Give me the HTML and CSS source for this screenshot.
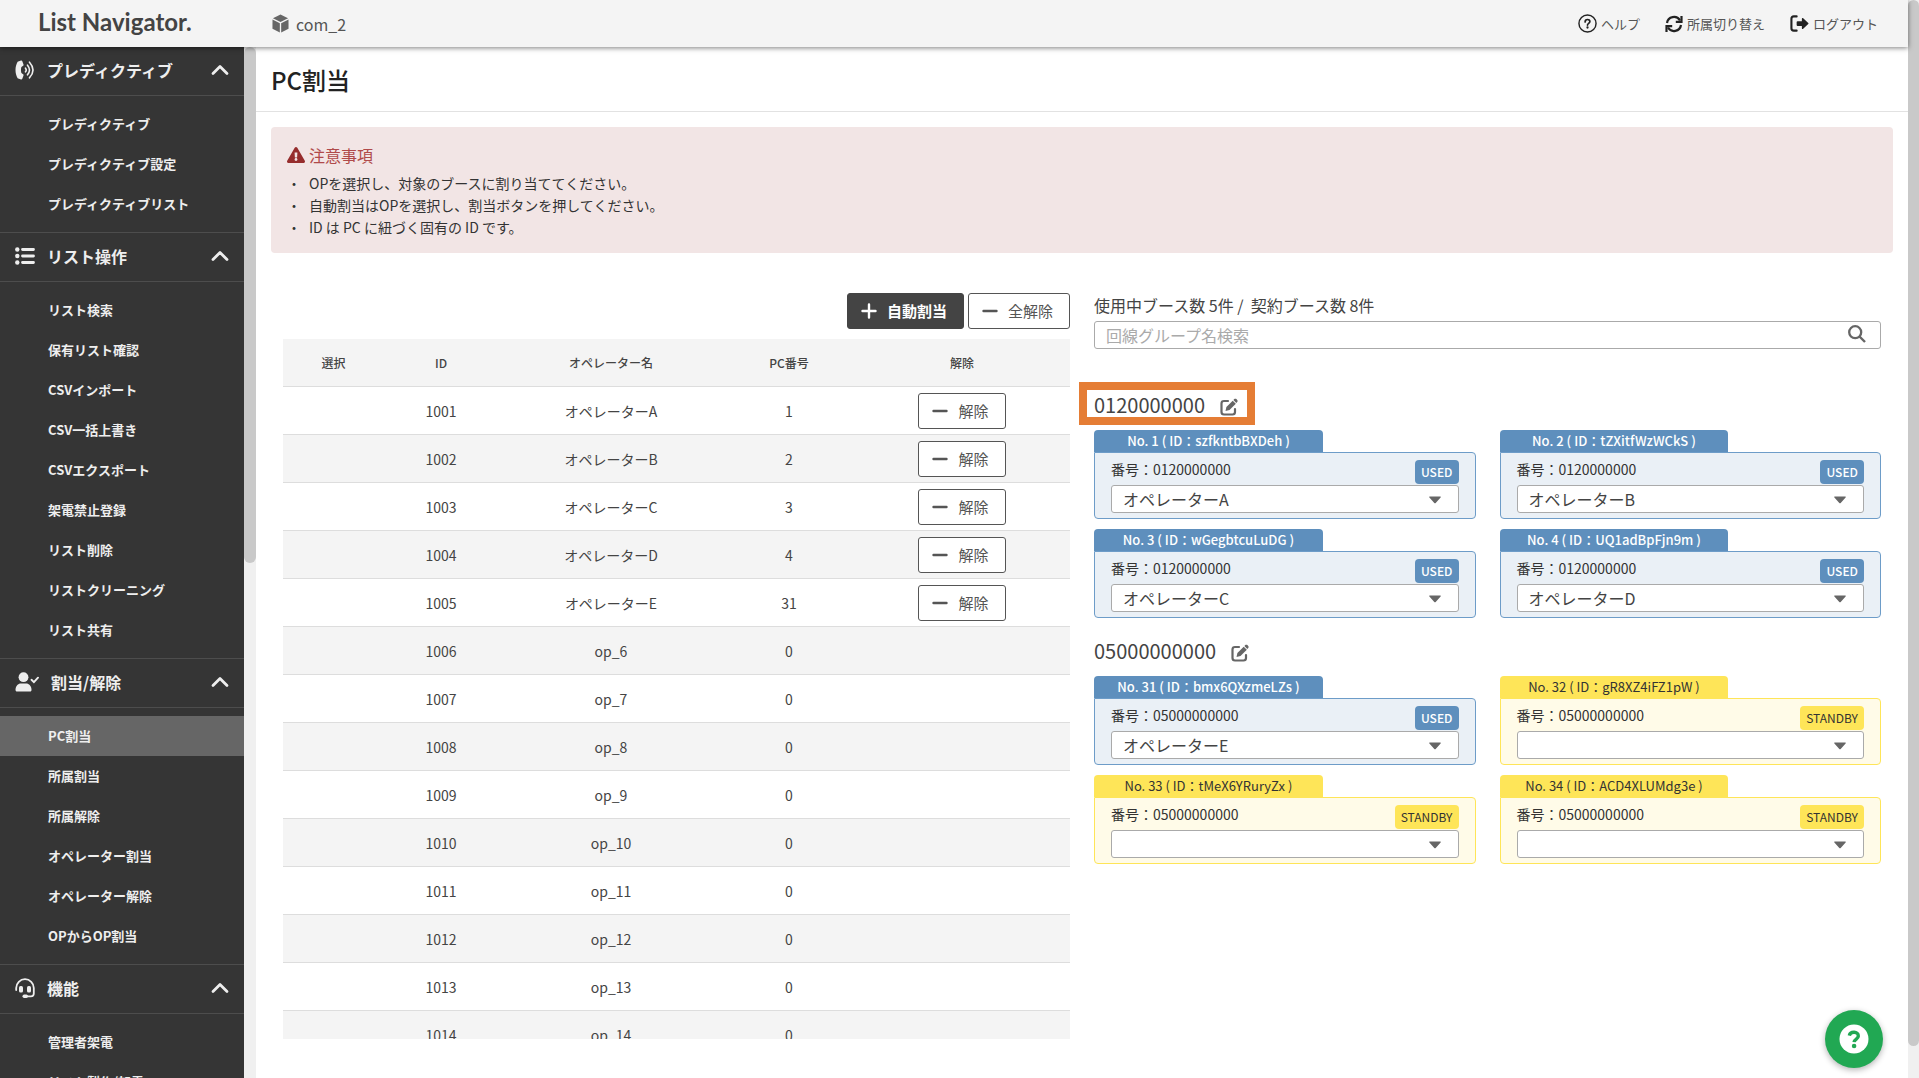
FILE: index.html
```html
<!DOCTYPE html>
<html lang="ja">
<head>
<meta charset="utf-8">
<meta name="viewport" content="width=device-width, initial-scale=1">
<title>PC割当 | List Navigator.</title>
<link rel="stylesheet" href="styles.css">
</head>
<body>
<svg class="sprite" aria-hidden="true">
  <symbol id="i-cube" viewBox="0 0 18 20"><path d="M9 .5l8 3.900L9 8.300 1 4.400z"/><path d="M.500 5.800l7.800 3.900v9.800L.500 15.600z"/><path d="M17.500 5.800L9.700 9.700v9.800l7.800-3.900z"/></symbol>
  <symbol id="i-help" viewBox="0 0 20 20"><circle cx="10" cy="10" r="9" fill="none" stroke="currentColor" stroke-width="1.500"/><path d="M7.500 8.300c0-3.400 5-3.200 5-.4 0 1.900-2.500 1.900-2.500 3.700" fill="none" stroke="currentColor" stroke-width="1.800" stroke-linecap="round"/><circle cx="10" cy="14.200" r="1.200"/></symbol>
  <symbol id="i-sync" viewBox="0 0 18 18"><g fill="none" stroke="currentColor" stroke-width="2.200"><path d="M2 8A7 7 0 0 1 15 5.500M16 10A7 7 0 0 1 3 12.500"/><path d="M16.500 1v5.800h-5.700M1.500 17v-5.800h5.700"/></g></symbol>
  <symbol id="i-logout" viewBox="0 0 20 18"><path d="M7 1.500H4Q1.500 1.500 1.500 4v10Q1.500 16.500 4 16.500H7" fill="none" stroke="currentColor" stroke-width="2.200" stroke-linecap="round"/><path d="M8 6.500h4.500V4c0-.9.800-1.200 1.400-.6l5.300 5c.4.400.4.800 0 1.200l-5.300 5c-.6.600-1.400.3-1.400-.6v-2.500H8c-.6 0-1-.4-1-1v-3c0-.6.400-1 1-1z"/></symbol>
  <symbol id="i-phone" viewBox="0 0 20 20"><path d="M2.600 1.800L6 .600c.6-.2 1 0 1.300.6l1.200 3.400c.2.500 0 .9-.4 1.200L6.400 7.100c-.6 1.900-.6 3.900 0 5.800l1.700 1.300c.4.300.6.700.4 1.200l-1.200 3.400c-.3.600-.7.800-1.300.6l-3.400-1.200C-.200 13.300-.200 6.700 2.600 1.800z"/><g fill="none" stroke="currentColor" stroke-width="1.600" stroke-linecap="round"><path d="M10.500 8.200q1.500 1.800 0 3.600M12.500 5.200q4 4.800 0 9.600M14.500 2.200q7 7.800 0 15.600"/></g></symbol>
  <symbol id="i-list" viewBox="0 0 20 18"><circle cx="2.300" cy="2.500" r="2.200"/><circle cx="2.300" cy="9" r="2.200"/><circle cx="2.300" cy="15.500" r="2.200"/><path d="M7.500 2.500h11M7.500 9h11M7.500 15.500h11" stroke="currentColor" stroke-width="2.800" stroke-linecap="round"/></symbol>
  <symbol id="i-user" viewBox="0 0 24 20"><circle cx="8.500" cy="5.200" r="4.900"/><path d="M.5 18c0-4 2.500-6.500 5.500-6.500h5c3 0 5.500 2.500 5.500 6.500 0 .9-.5 1.500-1.500 1.500H2c-1 0-1.500-.6-1.500-1.500z"/><path d="M16.500 7.800l2.400 2.300 4.100-4.400" fill="none" stroke="currentColor" stroke-width="1.900" stroke-linecap="round"/></symbol>
  <symbol id="i-headset" viewBox="0 0 20 20"><path d="M1.200 12V10a8.800 8.800 0 0 1 17.600 0v5.500c0 1.800-1.200 2.800-2.800 2.800h-5" fill="none" stroke="currentColor" stroke-width="1.800" stroke-linecap="round"/><rect x="4" y="8" width="4" height="6.500" rx="1.600"/><rect x="12" y="8" width="4" height="6.500" rx="1.600"/><rect x="7.500" y="16.500" width="5.500" height="3.400" rx="1.700"/></symbol>
  <symbol id="i-up" viewBox="0 0 18 12"><path d="M2 9.500l7-7 7 7" fill="none" stroke="currentColor" stroke-width="2.800" stroke-linecap="round" stroke-linejoin="round"/></symbol>
  <symbol id="i-warn" viewBox="0 0 576 512"><path d="M569.517 440.013C587.975 472.007 564.806 512 527.940 512H48.054c-36.937 0-59.999-40.055-41.577-71.987L246.423 23.985c18.467-32.009 64.720-31.951 83.154 0l239.940 416.028zM288 354c-25.405 0-46 20.595-46 46s20.595 46 46 46 46-20.595 46-46-20.595-46-46-46zm-43.673-165.346l7.418 136c.347 6.364 5.609 11.346 11.982 11.346h48.546c6.373 0 11.635-4.982 11.982-11.346l7.418-136c.375-6.874-5.098-12.654-11.982-12.654h-63.383c-6.884 0-12.356 5.780-11.981 12.654z"/></symbol>
  <symbol id="i-plus" viewBox="0 0 16 16"><path d="M8 1.500v13M1.500 8h13" stroke="currentColor" stroke-width="2.400" stroke-linecap="round"/></symbol>
  <symbol id="i-minus" viewBox="0 0 16 16"><path d="M1.500 8h13" stroke="currentColor" stroke-width="2.400" stroke-linecap="round"/></symbol>
  <symbol id="i-search" viewBox="0 0 18 18"><circle cx="7.200" cy="7.200" r="6" fill="none" stroke="currentColor" stroke-width="2.300"/><path d="M11.500 11.500l5.500 5.500" stroke="currentColor" stroke-width="2.400"/></symbol>
  <symbol id="i-edit" viewBox="0 0 18 18"><path d="M8 3H4Q1.500 3 1.500 5.500v8.500Q1.500 16.500 4 16.500h8.500Q15 16.500 15 14v-3" fill="none" stroke="currentColor" stroke-width="2.200" stroke-linecap="round"/><path d="M5.500 13l.9-4 6.300-6.300 3.100 3.100-6.300 6.300z"/><path d="M13.400 2l.9-.9c.6-.6 1.500-.6 2.100 0l.8.800c.6.600.6 1.500 0 2.100l-.9.900z"/></symbol>
  <symbol id="i-down" viewBox="0 0 12 8"><path d="M.8.500h10.400c.6 0 .8.700.4 1.100L6.700 7c-.4.400-1 .4-1.400 0L.4 1.600C0 1.200.2.500.8.500z"/></symbol>
  <symbol id="i-chat" viewBox="0 0 30 30"><circle cx="15" cy="15" r="14.500" fill="#fff"/><path d="M10.300 11.600c1-4.600 9.200-4.400 9 .5-.1 3-3.900 2.800-4.200 6" fill="none" stroke="#21a853" stroke-width="3.400" stroke-linecap="butt"/><circle cx="15.100" cy="22" r="2.300" fill="#21a853"/></symbol>
</svg>

<div class="app">
  <div class="page">
    <header class="topbar">
      <a class="logo" href="#">List Navigator.</a>
      <div class="company"><svg class="icon-cube"><use href="#i-cube"/></svg>com_2</div>
      <nav class="topnav" aria-label="ユーザーメニュー">
        <a href="#"><svg class="icon-md"><use href="#i-help"/></svg>ヘルプ</a>
        <a href="#"><svg class="icon-sync"><use href="#i-sync"/></svg>所属切り替え</a>
        <a href="#"><svg class="icon-md"><use href="#i-logout"/></svg>ログアウト</a>
      </nav>
    </header>

    <div class="body">
      <nav class="sidebar" aria-label="メインメニュー">
        <section class="menu">
          <button class="menu-head" type="button"><svg class="icon-menu"><use href="#i-phone"/></svg>プレディクティブ<svg class="icon-up"><use href="#i-up"/></svg></button>
          <ul>
            <li><a href="#">プレディクティブ</a></li>
            <li><a href="#">プレディクティブ設定</a></li>
            <li><a href="#">プレディクティブリスト</a></li>
          </ul>
        </section>
        <section class="menu">
          <button class="menu-head" type="button"><svg class="icon-menu"><use href="#i-list"/></svg>リスト操作<svg class="icon-up"><use href="#i-up"/></svg></button>
          <ul>
            <li><a href="#">リスト検索</a></li>
            <li><a href="#">保有リスト確認</a></li>
            <li><a href="#">CSVインポート</a></li>
            <li><a href="#">CSV一括上書き</a></li>
            <li><a href="#">CSVエクスポート</a></li>
            <li><a href="#">架電禁止登録</a></li>
            <li><a href="#">リスト削除</a></li>
            <li><a href="#">リストクリーニング</a></li>
            <li><a href="#">リスト共有</a></li>
          </ul>
        </section>
        <section class="menu">
          <button class="menu-head" type="button"><svg class="icon-user"><use href="#i-user"/></svg>割当/解除<svg class="icon-up"><use href="#i-up"/></svg></button>
          <ul>
            <li><a class="current" href="#" aria-current="page">PC割当</a></li>
            <li><a href="#">所属割当</a></li>
            <li><a href="#">所属解除</a></li>
            <li><a href="#">オペレーター割当</a></li>
            <li><a href="#">オペレーター解除</a></li>
            <li><a href="#">OPからOP割当</a></li>
          </ul>
        </section>
        <section class="menu">
          <button class="menu-head" type="button"><svg class="icon-menu"><use href="#i-headset"/></svg>機能<svg class="icon-up"><use href="#i-up"/></svg></button>
          <ul>
            <li><a href="#">管理者架電</a></li>
            <li><a href="#">リスト製作/架電</a></li>
          </ul>
        </section>
      </nav>
      <div class="scrollbar"><div class="thumb thumb-side"></div></div>

      <main class="main">
        <h1>PC割当</h1>
        <section class="notice">
          <h2><svg class="icon-warn"><use href="#i-warn"/></svg>注意事項</h2>
          <ul>
            <li>OPを選択し、対象のブースに割り当ててください。</li>
            <li>自動割当はOPを選択し、割当ボタンを押してください。</li>
            <li>ID は PC に紐づく固有の ID です。</li>
          </ul>
        </section>

        <div class="columns">
          <section class="operators">
            <div class="actions">
              <button class="btn btn-dark" type="button"><svg class="icon-sm"><use href="#i-plus"/></svg>自動割当</button>
              <button class="btn" type="button"><svg class="icon-sm"><use href="#i-minus"/></svg>全解除</button>
            </div>
            <div class="table-wrap">
              <table>
                <colgroup><col class="c-select"><col class="c-id"><col class="c-name"><col class="c-pc"><col></colgroup>
                <thead><tr><th>選択</th><th>ID</th><th>オペレーター名</th><th>PC番号</th><th>解除</th></tr></thead>
                <tbody>
                  <tr><td></td><td>1001</td><td>オペレーターA</td><td>1</td><td><button class="btn" type="button"><svg class="icon-sm"><use href="#i-minus"/></svg>解除</button></td></tr>
                  <tr><td></td><td>1002</td><td>オペレーターB</td><td>2</td><td><button class="btn" type="button"><svg class="icon-sm"><use href="#i-minus"/></svg>解除</button></td></tr>
                  <tr><td></td><td>1003</td><td>オペレーターC</td><td>3</td><td><button class="btn" type="button"><svg class="icon-sm"><use href="#i-minus"/></svg>解除</button></td></tr>
                  <tr><td></td><td>1004</td><td>オペレーターD</td><td>4</td><td><button class="btn" type="button"><svg class="icon-sm"><use href="#i-minus"/></svg>解除</button></td></tr>
                  <tr><td></td><td>1005</td><td>オペレーターE</td><td>31</td><td><button class="btn" type="button"><svg class="icon-sm"><use href="#i-minus"/></svg>解除</button></td></tr>
                  <tr><td></td><td>1006</td><td>op_6</td><td>0</td><td></td></tr>
                  <tr><td></td><td>1007</td><td>op_7</td><td>0</td><td></td></tr>
                  <tr><td></td><td>1008</td><td>op_8</td><td>0</td><td></td></tr>
                  <tr><td></td><td>1009</td><td>op_9</td><td>0</td><td></td></tr>
                  <tr><td></td><td>1010</td><td>op_10</td><td>0</td><td></td></tr>
                  <tr><td></td><td>1011</td><td>op_11</td><td>0</td><td></td></tr>
                  <tr><td></td><td>1012</td><td>op_12</td><td>0</td><td></td></tr>
                  <tr><td></td><td>1013</td><td>op_13</td><td>0</td><td></td></tr>
                  <tr><td></td><td>1014</td><td>op_14</td><td>0</td><td></td></tr>
                </tbody>
              </table>
            </div>
          </section>

          <section class="booths">
            <p class="count">使用中ブース数 5件 /&nbsp; 契約ブース数 8件</p>
            <div class="search">
              <input type="text" placeholder="回線グループ名検索" aria-label="回線グループ名検索">
              <svg class="icon-search"><use href="#i-search"/></svg>
            </div>

            <section class="group">
              <h2 class="group-title marked">0120000000<button type="button" aria-label="編集"><svg class="icon-edit"><use href="#i-edit"/></svg></button></h2>
              <div class="cards">
                <article class="card used">
                  <h3>No. 1 ( ID：szfkntbBXDeh )</h3>
                  <div class="card-body">
                    <div class="card-row"><label for="b1">番号：0120000000</label><span class="badge">USED</span></div>
                    <div class="select"><select id="b1"><option>オペレーターA</option></select><svg class="icon-down"><use href="#i-down"/></svg></div>
                  </div>
                </article>
                <article class="card used">
                  <h3>No. 2 ( ID：tZXitfWzWCkS )</h3>
                  <div class="card-body">
                    <div class="card-row"><label for="b2">番号：0120000000</label><span class="badge">USED</span></div>
                    <div class="select"><select id="b2"><option>オペレーターB</option></select><svg class="icon-down"><use href="#i-down"/></svg></div>
                  </div>
                </article>
                <article class="card used">
                  <h3>No. 3 ( ID：wGegbtcuLuDG )</h3>
                  <div class="card-body">
                    <div class="card-row"><label for="b3">番号：0120000000</label><span class="badge">USED</span></div>
                    <div class="select"><select id="b3"><option>オペレーターC</option></select><svg class="icon-down"><use href="#i-down"/></svg></div>
                  </div>
                </article>
                <article class="card used">
                  <h3>No. 4 ( ID：UQ1adBpFjn9m )</h3>
                  <div class="card-body">
                    <div class="card-row"><label for="b4">番号：0120000000</label><span class="badge">USED</span></div>
                    <div class="select"><select id="b4"><option>オペレーターD</option></select><svg class="icon-down"><use href="#i-down"/></svg></div>
                  </div>
                </article>
              </div>
            </section>

            <section class="group">
              <h2 class="group-title">05000000000<button type="button" aria-label="編集"><svg class="icon-edit"><use href="#i-edit"/></svg></button></h2>
              <div class="cards">
                <article class="card used">
                  <h3>No. 31 ( ID：bmx6QXzmeLZs )</h3>
                  <div class="card-body">
                    <div class="card-row"><label for="b31">番号：05000000000</label><span class="badge">USED</span></div>
                    <div class="select"><select id="b31"><option>オペレーターE</option></select><svg class="icon-down"><use href="#i-down"/></svg></div>
                  </div>
                </article>
                <article class="card standby">
                  <h3>No. 32 ( ID：gR8XZ4iFZ1pW )</h3>
                  <div class="card-body">
                    <div class="card-row"><label for="b32">番号：05000000000</label><span class="badge">STANDBY</span></div>
                    <div class="select"><select id="b32"><option></option></select><svg class="icon-down"><use href="#i-down"/></svg></div>
                  </div>
                </article>
                <article class="card standby">
                  <h3>No. 33 ( ID：tMeX6YRuryZx )</h3>
                  <div class="card-body">
                    <div class="card-row"><label for="b33">番号：05000000000</label><span class="badge">STANDBY</span></div>
                    <div class="select"><select id="b33"><option></option></select><svg class="icon-down"><use href="#i-down"/></svg></div>
                  </div>
                </article>
                <article class="card standby">
                  <h3>No. 34 ( ID：ACD4XLUMdg3e )</h3>
                  <div class="card-body">
                    <div class="card-row"><label for="b34">番号：05000000000</label><span class="badge">STANDBY</span></div>
                    <div class="select"><select id="b34"><option></option></select><svg class="icon-down"><use href="#i-down"/></svg></div>
                  </div>
                </article>
              </div>
            </section>
          </section>
        </div>
      </main>
    </div>
  </div>
  <div class="scrollbar scrollbar-page"><div class="thumb thumb-page"></div></div>
</div>
<button class="fab" type="button" aria-label="サポート"><svg class="icon-chat"><use href="#i-chat"/></svg></button>
</body>
</html>
```
FILE: styles.css
```css
* { box-sizing: border-box; }

body {
  margin: 0;
  font-family: "Noto Sans CJK JP", "Noto Sans", sans-serif;
  font-size: 14px;
  line-height: 20px;
  color: #444;
  background: #fff;
}

h1, h2, h3, p, ul { margin: 0; padding: 0; font-weight: 400; }
ul { list-style: none; }
a { color: inherit; text-decoration: none; }
button, input, select { font: inherit; color: inherit; }
svg { display: block; flex: none; fill: currentColor; }

.sprite { position: absolute; width: 0; height: 0; }

/* Icon sizes */
.icon-cube { width: 17px; height: 19px; color: #666; }
.icon-md { width: 19px; height: 19px; }
.icon-sync { width: 18px; height: 18px; }
.icon-menu { width: 20px; height: 20px; }
.icon-user { width: 24px; height: 20px; }
.icon-up { width: 18px; height: 12px; margin-left: auto; }
.icon-warn { width: 18px; height: 16px; color: #962d2d; }
.icon-sm { width: 16px; height: 16px; }
.icon-edit { width: 18px; height: 18px; }
.icon-chat { width: 30px; height: 30px; }

/* Shell */
.app { display: flex; height: 100vh; overflow: hidden; }
.page { flex: 1; min-width: 0; display: flex; flex-direction: column; }
.body { flex: 1; min-height: 0; display: flex; }

.scrollbar { flex: none; width: 12px; background: #f0f0f0; }
.scrollbar-page { width: 11px; }
.thumb { background: #c9c9c9; border-radius: 6px; }
.thumb-side { height: 50%; }
.thumb-page { height: 97%; }

/* Top bar */
.topbar {
  position: relative;
  z-index: 1;
  flex: none;
  display: flex;
  align-items: center;
  height: 47px;
  padding-right: 30px;
  background: #f4f4f4;
  box-shadow: 0 1px 5px rgba(0, 0, 0, 0.5);
}
.logo {
  width: 272px;
  padding: 0 0 4px 38px;
  font-family: Lato, sans-serif;
  font-size: 24px;
  font-weight: 700;
  line-height: 28px;
  color: #444;
}
.company { display: flex; align-items: center; gap: 7px; font-size: 16px; color: #555; }
.topnav { display: flex; gap: 25px; margin-left: auto; font-size: 13px; }
.topnav a { display: flex; align-items: center; gap: 4px; color: #555; }
.topnav svg { color: #222; }

/* Sidebar */
.sidebar { flex: none; width: 244px; overflow: hidden; background: #353535; color: #eee; }
.menu + .menu { border-top: 1px solid #4d4d4d; }
.menu-head {
  display: flex;
  align-items: center;
  gap: 12px;
  width: 100%;
  height: 49px;
  padding: 0 15px 2px;
  border: 0;
  border-bottom: 1px solid #4d4d4d;
  background: none;
  font-size: 16px;
  font-weight: 700;
  text-align: left;
}
.menu ul { padding: 8px 0; }
.menu a {
  display: block;
  padding-left: 48px;
  font-size: 13px;
  font-weight: 700;
  line-height: 40px;
}
.menu .current { background: #666; }

/* Main */
.main { flex: 1; min-width: 0; overflow: hidden; }
.main h1 {
  padding: 15px 15px 13px;
  border-bottom: 1px solid #e2e2e2;
  font-size: 24px;
  font-weight: 500;
  line-height: 36px;
  color: #222;
}
.notice {
  margin: 15px 15px 0;
  padding: 17px 16px 15px;
  border-radius: 4px;
  background: #f2e5e5;
}
.notice h2 {
  display: flex;
  align-items: center;
  gap: 4px;
  margin-bottom: 6px;
  font-size: 16px;
  line-height: 22px;
  color: #b04a4a;
}
.notice li { display: flex; line-height: 22px; color: #333; }
.notice li::before { content: "・"; width: 22px; }

.columns {
  display: grid;
  grid-template-columns: 1fr 1fr;
  gap: 24px;
  margin: 40px 27px 0;
}

/* Operator table */
.actions { display: flex; justify-content: flex-end; gap: 4px; margin-bottom: 10px; }
.btn {
  display: inline-flex;
  align-items: center;
  gap: 10px;
  height: 36px;
  padding: 0 16px 0 13px;
  border: 1px solid #555;
  border-radius: 3px;
  background: #fff;
  font-size: 15px;
  color: #555;
  vertical-align: middle;
}
.btn-dark { background: #444; border-color: #444; color: #fff; font-weight: 700; }

.table-wrap { max-height: 700px; overflow: hidden; }
table { width: 100%; border-collapse: separate; border-spacing: 0; table-layout: fixed; }
.c-select { width: 101px; }
.c-id { width: 114px; }
.c-name { width: 226px; }
.c-pc { width: 130px; }
th, td { height: 48px; padding: 0; border-bottom: 1px solid #ddd; text-align: center; }
th { background: #f4f4f4; font-size: 12px; font-weight: 500; color: #444; }
tbody tr:nth-child(even) { background: #f4f4f4; }

/* Booths */
.count { font-size: 16px; line-height: 24px; margin-bottom: 4px; }
.search { position: relative; }
.search input {
  display: block;
  width: 100%;
  height: 28px;
  padding: 0 40px 0 11px;
  border: 1px solid #aaa;
  border-radius: 3px;
  background: #fff;
  font-size: 16px;
}
.search input::placeholder { color: #aaa; }
.icon-search { position: absolute; top: 4px; right: 15px; width: 18px; height: 18px; color: #666; }

.group { margin-top: 19px; }
.search + .group { margin-top: 42px; }
.group-title {
  position: relative;
  display: flex;
  align-items: center;
  width: fit-content;
  gap: 15px;
  margin-bottom: 11px;
  font-size: 20px;
  line-height: 28px;
}
.group-title button { padding: 4px 0 0; border: 0; background: none; color: #666; }
.marked::after { content: ""; position: absolute; inset: -9px -17px -6px -15px; border: 8px solid #e57d35; pointer-events: none; }

.cards { display: grid; grid-template-columns: 1fr 1fr; gap: 10px 24px; }
.card h3 {
  width: 60%;
  border-radius: 4px 4px 0 0;
  font-size: 13px;
  line-height: 22px;
  text-align: center;
}
.card-body { padding: 7px 16px 5px; border: 1px solid; border-radius: 0 4px 4px 4px; }
.card-row { display: flex; justify-content: space-between; color: #333; }
.card-row label { line-height: 18px; }
.badge { padding: 0 6px; border-radius: 4px; font-size: 12px; line-height: 24px; }
.used h3, .used .badge { background: #5e8fbd; color: #fff; font-weight: 500; }
.used .card-body { background: #eaf0f6; border-color: #6d9cc8; }
.standby h3, .standby .badge { background: #fee558; color: #333; }
.standby .card-body { background: #fffbe8; border-color: #fee558; }

.select { position: relative; margin-top: 1px; }
.select select {
  appearance: none;
  display: block;
  width: 100%;
  height: 28px;
  padding: 0 32px 0 11px;
  border: 1px solid #aaa;
  border-radius: 3px;
  background: #fff;
  font-size: 16px;
}
.icon-down { position: absolute; top: 11px; right: 18px; width: 12px; height: 8px; color: #666; pointer-events: none; }

/* Support button */
.fab {
  position: fixed;
  right: 36px;
  bottom: 10px;
  display: grid;
  place-items: center;
  width: 58px;
  height: 58px;
  padding: 0;
  border: 0;
  border-radius: 50%;
  background: #21a853;
  box-shadow: 0 2px 6px rgba(0, 0, 0, 0.3);
}
```
